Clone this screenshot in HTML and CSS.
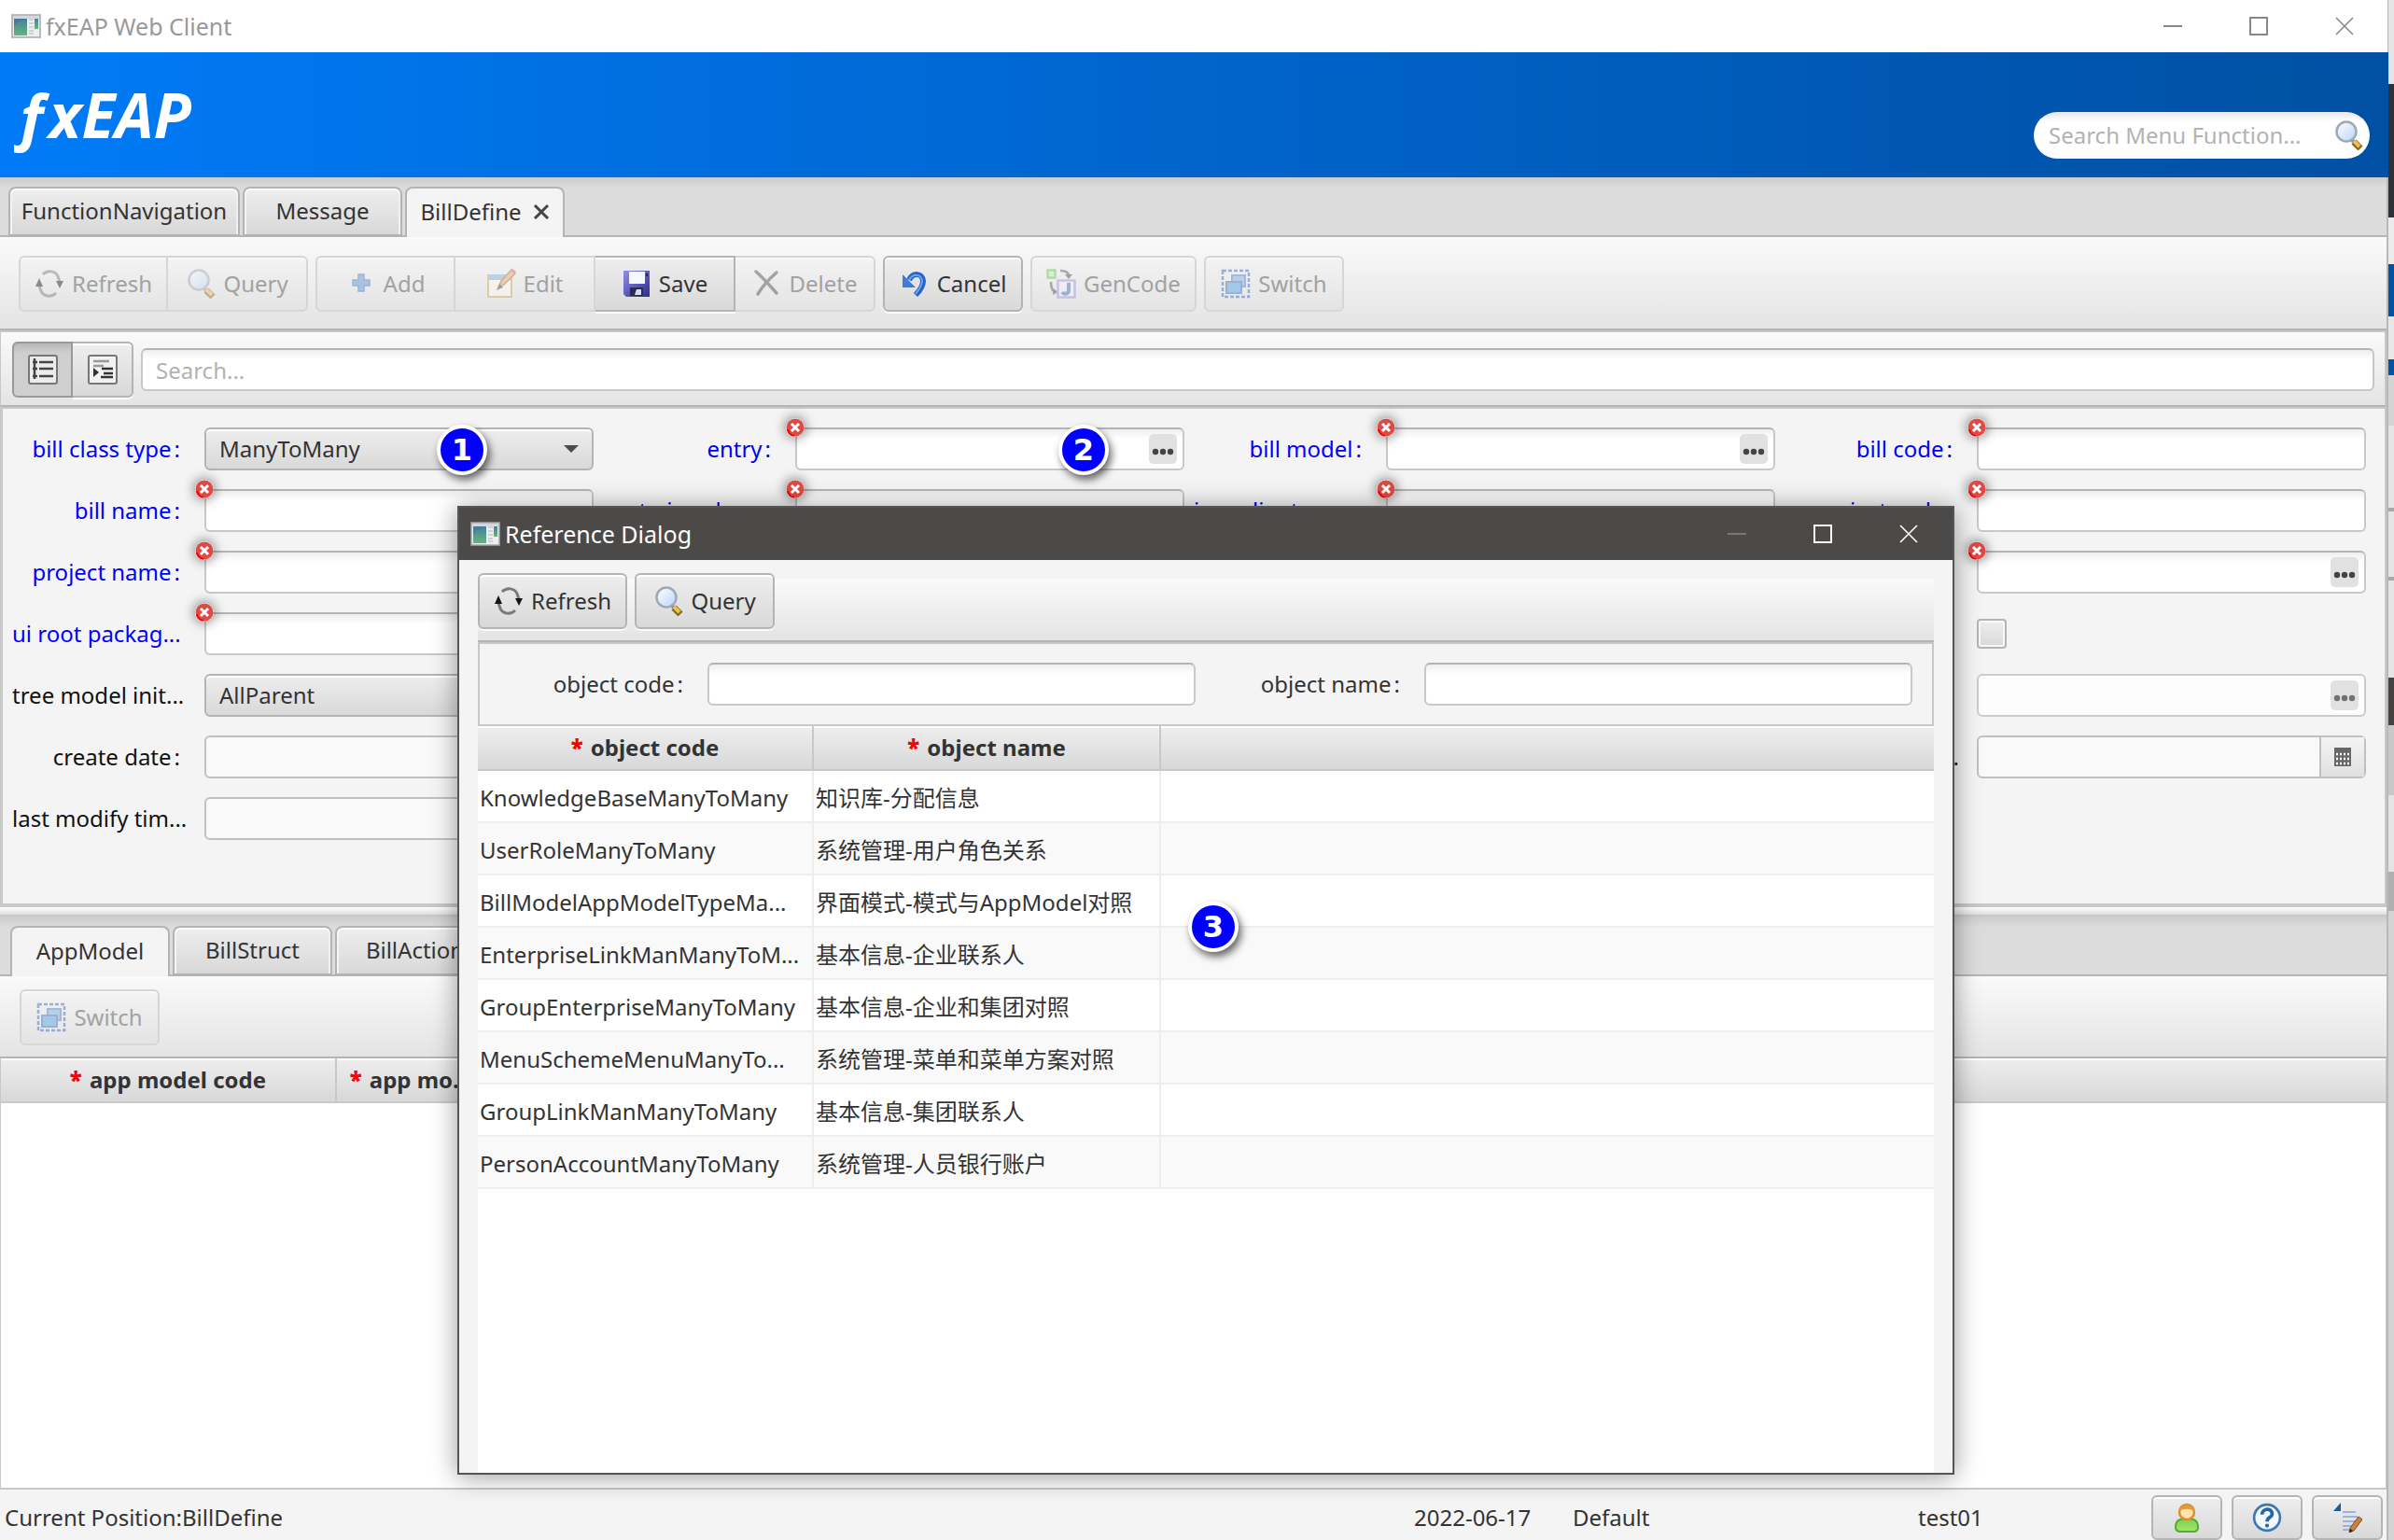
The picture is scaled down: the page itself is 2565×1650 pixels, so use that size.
FILE: index.html
```html
<!DOCTYPE html>
<html lang="en">
<head>
<meta charset="utf-8">
<title>fxEAP Web Client</title>
<link rel="stylesheet" href="styles.css">
</head>
<body>
<svg class="defs" aria-hidden="true">
  <defs>
    <linearGradient id="g-app" x1="0" y1="0" x2="0" y2="1"><stop offset="0" stop-color="#4a7da0"/><stop offset="1" stop-color="#5fb878"/></linearGradient>
    <linearGradient id="g-lens" x1="0" y1="0" x2="1" y2="1"><stop offset="0" stop-color="#ffffff"/><stop offset="1" stop-color="#b9d4fa"/></linearGradient>
    <linearGradient id="g-disk" x1="0" y1="0" x2="1" y2="1"><stop offset="0" stop-color="#8f8ff0"/><stop offset="1" stop-color="#2a2a90"/></linearGradient>
    <linearGradient id="g-green" x1="0" y1="0" x2="0" y2="1"><stop offset="0" stop-color="#7ccf4e"/><stop offset="1" stop-color="#a5e66b"/></linearGradient>
  </defs>
  <symbol id="i-app" viewBox="0 0 32 26">
    <rect x="1" y="1" width="30" height="24" fill="#eceef0" stroke="#a3a8ad" stroke-width="1.5"/>
    <rect x="2" y="2" width="28" height="3" fill="#d2d8dd"/>
    <rect x="3" y="5" width="14" height="18" fill="url(#g-app)"/>
    <path d="M3 14C7 8 12 6 17 6V5H3z" fill="#44799c" opacity=".7"/>
    <path d="M19 6h5M19 10h5M19 14h5M19 18h5M19 21h5" stroke="#c4c8cc" stroke-width="1.5"/>
    <rect x="25" y="5" width="4" height="11" fill="url(#g-app)"/>
  </symbol>
  <symbol id="i-refresh" viewBox="0 0 32 32">
    <path d="M9 6C14 1 22 2 25 8l2 6M23 26C18 31 10 30 7 24l-2-6" fill="none" stroke="#7a7a7a" stroke-width="3"/>
    <path d="M5 10l4 9H1zM27 21l-4-8h8z" fill="#161616"/>
  </symbol>
  <symbol id="i-query" viewBox="0 0 32 32">
    <path d="M20 21l4 4" stroke="#8d8d8d" stroke-width="4"/>
    <path d="M22 23l7 7" stroke="#8a6420" stroke-width="7"/>
    <path d="M22 22l6 6" stroke="#e8c24e" stroke-width="4"/>
    <circle cx="14" cy="12" r="10.500" fill="url(#g-lens)" stroke="#a0a8b2" stroke-width="2.500"/>
  </symbol>
  <symbol id="i-add" viewBox="0 0 32 32">
    <path d="M13 6h6v6h6v6h-6v6h-6v-6H7v-6h6z" fill="#5e8fd8" stroke="#3f6fc0" stroke-width="1.500"/>
  </symbol>
  <symbol id="i-edit" viewBox="0 0 32 32">
    <rect x="2" y="7" width="25" height="23" fill="#fffdf2" stroke="#c4a860" stroke-width="2"/>
    <rect x="2" y="6" width="25" height="6" fill="#7fb0d8"/>
    <path d="M13 20l3-7L27 1l4 4-12 12z" fill="#e8a868" stroke="#a86830" stroke-width="1.500"/>
    <path d="M11 23l3-7 4 4z" fill="#444"/><path d="M26 2l4 4 2-3-4-3z" fill="#e05a50"/>
  </symbol>
  <symbol id="i-save" viewBox="0 0 32 32">
    <path d="M2 2h28v28H5l-3-3z" fill="url(#g-disk)"/>
    <path d="M8 3h17v13H8z" fill="#f6f8ff"/><path d="M26 5h2v3h-2z" fill="#20206a"/>
    <path d="M9 20h14v9H9z" fill="#2b2b52"/><path d="M16 22h5v6h-7z" fill="#d5dcf2"/>
  </symbol>
  <symbol id="i-delete" viewBox="0 0 32 32">
    <path d="M4 3c7 6 13 13 22 23M26 4C19 10 12 17 6 27" fill="none" stroke="#4a4a4a" stroke-width="3.500" stroke-linecap="round"/>
  </symbol>
  <symbol id="i-cancel" viewBox="0 0 32 32">
    <path d="M10 12C14 4 24 4 25 13c0 6-3 10-8 15" fill="none" stroke="#2c62c8" stroke-width="6"/>
    <path d="M10 12C14 5 23 5 24 13c0 5-3 9-7 14" fill="none" stroke="#6aa4f0" stroke-width="2"/>
    <path d="M3 6v14h14z" fill="#3f79da"/>
  </symbol>
  <symbol id="i-gencode" viewBox="0 0 32 32">
    <rect x="1.500" y="1.500" width="8" height="8" fill="#c8f0c0" stroke="#5cc94c" stroke-width="2.500"/>
    <path d="M15 2c6 0 9 2 9 6M5 14c0 6 1 9 4 11" fill="none" stroke="#555" stroke-width="2.500"/>
    <path d="M20 6h8l-4 5zM8 21l4 4-5 3z" fill="#444"/>
    <rect x="12.500" y="12.500" width="18" height="18" fill="#f4f0ff" stroke="#a48ee0" stroke-width="2.500"/>
    <path d="M24 15v8c0 4-5 5-7 2" fill="none" stroke="#3c6eb0" stroke-width="4"/>
  </symbol>
  <symbol id="i-switch" viewBox="0 0 32 32">
    <rect x="2" y="2" width="28" height="28" fill="none" stroke="#3a62b8" stroke-width="2.500" stroke-dasharray="4 2"/>
    <rect x="12" y="7" width="14" height="12" fill="#7aaee0" stroke="#4a7cc4" stroke-width="2"/>
    <rect x="6" y="14" width="16" height="12" fill="#4f9fe6" stroke="#3a6cb8" stroke-width="2"/>
  </symbol>
  <symbol id="i-tree" viewBox="0 0 32 32">
    <rect x="1" y="1" width="30" height="30" rx="2" fill="#ececec" stroke="#777" stroke-width="2"/>
    <path d="M7 4v22M5 8h5M5 15h5M5 23h5M12 8h15M12 15h15M12 23h15" stroke="#444" stroke-width="2.500"/>
  </symbol>
  <symbol id="i-indent" viewBox="0 0 32 32">
    <rect x="1" y="1" width="30" height="30" rx="2" fill="#f2f2f2" stroke="#777" stroke-width="2"/>
    <path d="M6 7h17M6 12h11" stroke="#999" stroke-width="2.500"/>
    <path d="M15 15h12M17 20h10M14 24h13" stroke="#333" stroke-width="2.500"/><path d="M6 14v10l6-5z" fill="#333"/>
  </symbol>
  <symbol id="i-dots" viewBox="0 0 30 32"><circle cx="7" cy="19" r="3.200"/><circle cx="15" cy="19" r="3.200"/><circle cx="23" cy="19" r="3.200"/></symbol>
  <symbol id="i-error" viewBox="0 0 20 20">
    <circle cx="10" cy="10" r="9.500" fill="#de4a45"/><path d="M2 12a8 8 0 0 0 7 7" fill="none" stroke="#e00" stroke-width="2"/>
    <path d="M6 6l8 8M14 6l-8 8" stroke="#fff" stroke-width="3"/>
  </symbol>
  <symbol id="i-min" viewBox="0 0 20 20"><path d="M0 10h20" stroke="currentColor" stroke-width="2"/></symbol>
  <symbol id="i-max" viewBox="0 0 20 20"><path d="M1 1h18v18H1z" fill="none" stroke="currentColor" stroke-width="2"/></symbol>
  <symbol id="i-close" viewBox="0 0 20 20"><path d="M1 1l18 18M19 1L1 19" stroke="currentColor" stroke-width="1.600"/></symbol>
  <symbol id="i-tabclose" viewBox="0 0 18 18"><path d="M2 2l14 14M16 2L2 16" stroke="#444" stroke-width="3"/></symbol>
  <symbol id="i-cal" viewBox="0 0 18 20"><path d="M0 0h18v20H0z" fill="#666"/><path d="M2 7h14M2 12h14M2 17h14" stroke="#fff" stroke-width="2.500" stroke-dasharray="2 2"/></symbol>
  <symbol id="i-user" viewBox="0 0 28 32">
    <path d="M2 26c0-7 4-9 12-9s12 2 12 9c0 4-2 5-5 5H7c-3 0-5-1-5-5z" fill="url(#g-green)" stroke="#4fae2c" stroke-width="2"/>
    <circle cx="14" cy="10" r="8" fill="#ffe2ae" stroke="#dd8f2b" stroke-width="2.500"/><path d="M6 9c1-8 15-9 16 0-5-3-11-3-16 0z" fill="#e49a3a"/>
  </symbol>
  <symbol id="i-help" viewBox="0 0 30 30">
    <circle cx="15" cy="15" r="13" fill="#f2f8ff" stroke="#3f78b0" stroke-width="2.500"/>
    <path d="M10 12c0-7 11-7 10 0-1 3-5 3-5 7" fill="none" stroke="#2c669f" stroke-width="3.500"/><circle cx="15" cy="23" r="2" fill="#2c669f"/>
  </symbol>
  <symbol id="i-note" viewBox="0 0 32 32">
    <path d="M9 0v9H1z" fill="#1c5c94"/>
    <path d="M11 10h14M11 15h16M11 20h14M11 25h10M11 29h7" stroke="#9fb0dc" stroke-width="2"/>
    <path d="M19 27l9-12 4 3-9 12-5 2z" fill="#c98240" stroke="#7a4a1c" stroke-width="1"/><path d="M19 28l-1 4 4-2z" fill="#222"/>
  </symbol>
</svg>

<div class="desktop">
<div class="window">
  <div class="titlebar">
    <svg class="app-icon"><use href="#i-app"/></svg>
    <span class="title">fxEAP Web Client</span>
    <div class="winctl">
      <button aria-label="Minimize"><svg><use href="#i-min"/></svg></button>
      <button aria-label="Maximize"><svg><use href="#i-max"/></svg></button>
      <button aria-label="Close"><svg><use href="#i-close"/></svg></button>
    </div>
  </div>

  <header class="banner">
    <h1 class="logo">ƒxEAP</h1>
    <div class="menu-search">
      <input type="text" placeholder="Search Menu Function..." aria-label="Search Menu Function">
      <svg><use href="#i-query"/></svg>
    </div>
  </header>

  <div class="tabs main-tabs" role="tablist">
    <button class="tab tab-nav" role="tab">FunctionNavigation</button>
    <button class="tab" role="tab">Message</button>
    <button class="tab active" role="tab" aria-selected="true">BillDefine<svg class="tab-close"><use href="#i-tabclose"/></svg></button>
  </div>

  <div class="toolbar main-toolbar">
    <div class="group">
      <button class="btn" disabled><svg><use href="#i-refresh"/></svg>Refresh</button>
      <button class="btn" disabled><svg><use href="#i-query"/></svg>Query</button>
    </div>
    <div class="group">
      <button class="btn" disabled><svg><use href="#i-add"/></svg>Add</button>
      <button class="btn" disabled><svg><use href="#i-edit"/></svg>Edit</button>
      <button class="btn"><svg><use href="#i-save"/></svg>Save</button>
      <button class="btn" disabled><svg><use href="#i-delete"/></svg>Delete</button>
    </div>
    <button class="btn"><svg><use href="#i-cancel"/></svg>Cancel</button>
    <button class="btn" disabled><svg><use href="#i-gencode"/></svg>GenCode</button>
    <button class="btn" disabled><svg><use href="#i-switch"/></svg>Switch</button>
  </div>

  <div class="toolbar search-row">
    <div class="group">
      <button class="btn toggle on" aria-label="List" aria-pressed="true"><svg><use href="#i-tree"/></svg></button>
      <button class="btn toggle" aria-label="Indent"><svg><use href="#i-indent"/></svg></button>
    </div>
    <input class="box" type="text" placeholder="Search..." aria-label="Search">
  </div>

  <form class="form">
    <div class="col">
      <div class="field req"><label for="f-type">bill class type<i>:</i></label><div class="box combo"><select id="f-type"><option>ManyToMany</option></select></div></div>
      <div class="field req"><label for="f-name">bill name<i>:</i></label><div class="box"><input id="f-name" type="text"><svg class="error"><use href="#i-error"/></svg></div></div>
      <div class="field req"><label for="f-proj">project name<i>:</i></label><div class="box"><input id="f-proj" type="text"><svg class="error"><use href="#i-error"/></svg></div></div>
      <div class="field req"><label class="cut" for="f-pack">ui root packag...</label><div class="box"><input id="f-pack" type="text"><svg class="error"><use href="#i-error"/></svg></div></div>
      <div class="field"><label class="cut" for="f-tree">tree model init...</label><div class="box combo"><select id="f-tree"><option>AllParent</option></select></div></div>
      <div class="field"><label for="f-create">create date<i>:</i></label><div class="box dim"><input id="f-create" type="text" readonly></div></div>
      <div class="field"><label class="cut" for="f-mod">last modify tim...</label><div class="box dim"><input id="f-mod" type="text" readonly></div></div>
    </div>
    <div class="col">
      <div class="field req"><label for="f-entry">entry<i>:</i></label><div class="box"><input id="f-entry" type="text"><button type="button" class="pick" aria-label="Pick entry"><svg><use href="#i-dots"/></svg></button><svg class="error"><use href="#i-error"/></svg></div></div>
      <div class="field req"><label for="f-c2">root ui package<i>:</i></label><div class="box"><input id="f-c2" type="text"><svg class="error"><use href="#i-error"/></svg></div></div>
    </div>
    <div class="col">
      <div class="field req"><label for="f-model">bill model<i>:</i></label><div class="box"><input id="f-model" type="text"><button type="button" class="pick" aria-label="Pick bill model"><svg><use href="#i-dots"/></svg></button><svg class="error"><use href="#i-error"/></svg></div></div>
      <div class="field req"><label class="cut" for="f-c3">java client pa...</label><div class="box"><input id="f-c3" type="text"><svg class="error"><use href="#i-error"/></svg></div></div>
    </div>
    <div class="col">
      <div class="field req"><label for="f-code">bill code<i>:</i></label><div class="box"><input id="f-code" type="text"><svg class="error"><use href="#i-error"/></svg></div></div>
      <div class="field req"><label for="f-pcode">project code<i>:</i></label><div class="box"><input id="f-pcode" type="text"><svg class="error"><use href="#i-error"/></svg></div></div>
      <div class="field req"><label></label><div class="box"><input type="text" aria-label="Reference"><button type="button" class="pick" aria-label="Pick"><svg><use href="#i-dots"/></svg></button><svg class="error"><use href="#i-error"/></svg></div></div>
      <div class="field"><label></label><input class="check" type="checkbox" aria-label="Option"></div>
      <div class="field"><label></label><div class="box faint"><input type="text" aria-label="Reference" disabled><button type="button" class="pick" aria-label="Pick" disabled><svg><use href="#i-dots"/></svg></button></div></div>
      <div class="field"><label class="cut" for="f-date">last modify dat...</label><div class="box dim"><input id="f-date" type="text" readonly><button type="button" class="cal" aria-label="Calendar"><svg><use href="#i-cal"/></svg></button></div></div>
    </div>
    <span class="callout one">1</span>
    <span class="callout two">2</span>
  </form>
  <div class="splitter"></div>

  <div class="tabs sub-tabs" role="tablist">
    <button class="tab active" role="tab" aria-selected="true">AppModel</button>
    <button class="tab" role="tab">BillStruct</button>
    <button class="tab" role="tab">BillAction</button>
  </div>
  <div class="toolbar sub-toolbar">
    <button class="btn" disabled><svg><use href="#i-switch"/></svg>Switch</button>
  </div>
  <div class="sub-grid">
    <table class="grid">
      <colgroup><col class="w-a"><col class="w-b"><col></colgroup>
      <thead><tr><th><b>*</b> app model code</th><th><b>*</b> app mo...</th><th></th></tr></thead>
    </table>
  </div>

  <footer class="status">
    <span class="pos">Current Position:BillDefine</span>
    <span class="date">2022-06-17</span>
    <span class="unit">Default</span>
    <span class="who">test01</span>
    <div class="status-btns">
      <button class="btn" aria-label="User"><svg><use href="#i-user"/></svg></button>
      <button class="btn" aria-label="Help"><svg><use href="#i-help"/></svg></button>
      <button class="btn" aria-label="Notes"><svg><use href="#i-note"/></svg></button>
    </div>
  </footer>
</div>
<div class="behind"></div>

<section class="dialog" role="dialog" aria-label="Reference Dialog">
  <div class="titlebar dark">
    <svg class="app-icon"><use href="#i-app"/></svg>
    <span class="title">Reference Dialog</span>
    <div class="winctl">
      <button class="off" aria-label="Minimize"><svg><use href="#i-min"/></svg></button>
      <button aria-label="Maximize"><svg><use href="#i-max"/></svg></button>
      <button aria-label="Close"><svg><use href="#i-close"/></svg></button>
    </div>
  </div>
  <div class="dialog-body">
    <div class="toolbar dialog-toolbar">
      <button class="btn"><svg><use href="#i-refresh"/></svg>Refresh</button>
      <button class="btn"><svg><use href="#i-query"/></svg>Query</button>
    </div>
    <div class="filter">
      <div class="field"><label for="q-code">object code<i>:</i></label><input class="box" id="q-code" type="text"></div>
      <div class="field"><label for="q-name">object name<i>:</i></label><input class="box" id="q-name" type="text"></div>
    </div>
    <div class="result">
      <table class="grid rows">
        <colgroup><col class="w-c"><col class="w-d"><col></colgroup>
        <thead><tr><th><b>*</b> object code</th><th><b>*</b> object name</th><th></th></tr></thead>
        <tbody>
          <tr><td>KnowledgeBaseManyToMany</td><td>知识库-分配信息</td><td></td></tr>
          <tr><td>UserRoleManyToMany</td><td>系统管理-用户角色关系</td><td></td></tr>
          <tr><td>BillModelAppModelTypeMa...</td><td>界面模式-模式与AppModel对照</td><td></td></tr>
          <tr><td>EnterpriseLinkManManyToM...</td><td>基本信息-企业联系人</td><td></td></tr>
          <tr><td>GroupEnterpriseManyToMany</td><td>基本信息-企业和集团对照</td><td></td></tr>
          <tr><td>MenuSchemeMenuManyTo...</td><td>系统管理-菜单和菜单方案对照</td><td></td></tr>
          <tr><td>GroupLinkManManyToMany</td><td>基本信息-集团联系人</td><td></td></tr>
          <tr><td>PersonAccountManyToMany</td><td>系统管理-人员银行账户</td><td></td></tr>
        </tbody>
      </table>
    </div>
  </div>
  <span class="callout three">3</span>
</section>
</div>
</body>
</html>
```
FILE: styles.css
```css
* { box-sizing: border-box; }

body {
  margin: 0;
  font: 24px/32px "Noto Sans", "Noto Sans CJK SC", sans-serif;
  color: #333;
  background: #f4f4f4;
}

button, input, select { font: inherit; color: inherit; margin: 0; }
.defs { position: absolute; width: 0; height: 0; }

.desktop { position: relative; display: flex; min-height: 100vh; overflow: hidden; }
.window { flex: 1; min-width: 0; display: flex; flex-direction: column; border-right: 2px solid #b8b8b8; }
.behind {
  width: 6px;
  background: linear-gradient(#e4e4e4 90px, #2d3137 90px 233px, #ececec 233px 283px, #0052a5 283px 339px, #e8e8e8 339px 385px, #0052a5 385px 402px, #d4d4d4 402px 456px, #e4e4e4 456px 544px, #a8a8a8 544px 548px, #e4e4e4 548px 618px, #a8a8a8 618px 622px, #e4e4e4 622px 726px, #454341 726px 777px, #c8c8c8 777px 852px, #e4e4e4 852px 934px, #b0b0b0 934px 976px, #d4d4d4 976px);
}

/* title bars */
.titlebar { display: flex; align-items: center; height: 56px; padding-left: 12px; background: #fff; color: #999; }
.app-icon { width: 32px; height: 26px; }
.title { flex: 1; padding-left: 5px; font-size: 25px; }
.winctl { display: flex; }
.winctl button { width: 92px; height: 54px; padding: 0; border: 0; background: none; color: #888; }
.winctl svg { width: 20px; height: 20px; display: block; margin: 0 auto; }
.window > .titlebar { margin-right: -1px; }
.dark { padding-right: 1px; background: #4c4a48; color: #fff; }
.dark .winctl button { color: #fff; }
.dark .winctl .off { color: #777; }

/* banner */
.banner { display: flex; align-items: flex-start; justify-content: space-between; height: 134px; padding: 0 20px 0 16px; background: linear-gradient(90deg, #007bf7, #0056b0 83%, #0051a3); margin-right: -2px; }
.logo { margin: 21px 0 0; font: italic 700 66px/90px "Open Sans", sans-serif; color: #fff; }
.menu-search { display: flex; align-items: center; width: 360px; height: 50px; margin-top: 64px; padding: 0 7px 0 16px; border-radius: 25px; background: linear-gradient(#e6e6e6, #fff 10px); }
.menu-search input { flex: 1; min-width: 0; padding: 0; border: 0; background: none; outline: 0; }
.menu-search svg { width: 32px; height: 32px; }
::placeholder { color: #b2b2b2; opacity: 1; }

/* tabs */
.tabs { display: flex; gap: 3px; height: 64px; padding: 10px 9px 0; border-bottom: 2px solid #b4b4b4; background: linear-gradient(#cdcdcd, #dcdcdc 12px); }
.tab { display: flex; align-items: center; justify-content: center; gap: 12px; width: 171px; height: 54px; margin-bottom: -2px; padding: 0 0 2px; border: 2px solid #b4b4b4; border-radius: 8px 8px 0 0; background: linear-gradient(#eee, #d8d8d8); box-shadow: inset 0 2px #fff, inset 2px 0 #f4f4f4, inset -2px 0 #f0f0f0; white-space: nowrap; }
.tab-nav { width: 248px; }
.tab.active { border-bottom: 0; background: #f4f4f4; box-shadow: none; }
.tab:not(.active) { height: 53px; }
.tab-close { width: 18px; height: 18px; }
.sub-tabs { padding-left: 11px; }

/* toolbars and buttons */
.toolbar { display: flex; gap: 8px; background: linear-gradient(#fafafa, #e4e4e4); border-bottom: 2px solid #b4b4b4; }
.main-toolbar { padding: 20px 20px 18px; }
.main-toolbar, .search-row, .dialog-toolbar { box-shadow: 0 2px #c8c8c8; margin-bottom: 2px; }
.group { display: flex; }
.btn { display: flex; align-items: center; justify-content: center; gap: 8px; min-width: 150px; height: 60px; padding: 0 15px; border: 2px solid #b4b4b4; border-radius: 6px; background: linear-gradient(#eee, #d9d9d9); box-shadow: inset 0 2px #fff, 0 2px #fafafa; white-space: nowrap; }
.btn svg { width: 32px; height: 32px; flex: none; }
.btn:disabled { color: #a2a2a2; border-color: #d6d6d6; background: linear-gradient(#f3f3f3, #e4e4e4); box-shadow: inset 0 2px #f8f8f8; }
.btn:disabled svg { opacity: .45; }
.group .btn:not(:first-child) { border-left-width: 0; border-top-left-radius: 0; border-bottom-left-radius: 0; }
.group .btn:not(:last-child) { border-top-right-radius: 0; border-bottom-right-radius: 0; }
.search-row { align-items: center; padding: 10px 11px 8px 12px; border-left: 1px solid #c8c8c8; border-right: 2px solid #c8c8c8; }
.toggle { min-width: 65px; padding: 0; }
.toggle.on { background: linear-gradient(#b8b8b8, #cfcfcf 10px); border-color: #999; box-shadow: none; }
.sub-toolbar { padding: 14px 21px 12px; }

/* form */
.form { position: relative; display: grid; grid-template-columns: repeat(4, minmax(0, 1fr)); gap: 10px; padding: 20px 20px 68px 10px; border: solid #c8c8c8; border-width: 0 2px 4px 3px; background: #f4f4f4; }
.col { display: flex; flex-direction: column; gap: 20px; }
.field { display: flex; align-items: center; height: 46px; }
.field label { flex: none; width: 206px; padding-right: 26px; text-align: right; color: #111; white-space: nowrap; }
.field label i { font-style: normal; padding-left: 3px; }
.field.req label { color: #00f; }
.field label.cut { padding-right: 0; text-align: left; }
.box { position: relative; flex: 1; min-width: 0; display: flex; align-items: center; height: 46px; border: 2px solid #c8c8c8; border-top-color: #b4b4b4; border-radius: 6px; background: linear-gradient(#eee, #fff 10px); }
input.box { padding: 0 14px; outline: 0; }
.box input, .box select { flex: 1; min-width: 0; height: 100%; padding: 0 14px; border: 0; background: none; outline: 0; }
.dim { background: #f9f9f9; border-color: #c0c0c0; }
.faint { background: #fdfdfd; border-color: #ccc; }
.combo { border-color: #b4b4b4; background: linear-gradient(#eee, #d9d9d9); box-shadow: inset 0 2px #fff; }
.combo select { appearance: none; opacity: 1; }
.combo::after { content: ""; position: absolute; right: 14px; top: 17px; border: solid transparent; border-width: 8px 8px 0; border-top-color: #4c4c4c; pointer-events: none; }
.error { position: absolute; left: -12px; top: -12px; width: 20px; height: 20px; border-radius: 50%; box-shadow: 0 0 12px 2px rgba(0, 0, 0, .4); }
.pick { width: 30px; height: 32px; margin-right: 6px; padding: 0; border: 0; border-radius: 5px; background: #e1e1e1; }
.pick svg { display: block; width: 30px; height: 32px; fill: #444; }
.pick:disabled svg { opacity: .7; }
.cal { display: flex; align-items: center; justify-content: center; width: 48px; height: 42px; padding: 0; border: 0; border-left: 2px solid #c0c0c0; background: linear-gradient(#f4f4f4, #e0e0e0); }
.cal svg { width: 18px; height: 20px; }
.check { appearance: none; width: 32px; height: 32px; border: 2px solid #b4b4b4; border-radius: 4px; background: linear-gradient(#eee, #d9d9d9); box-shadow: inset 0 0 0 2px #f8f8f8; }

.splitter { height: 10px; border-bottom: 2px solid #c8c8c8; background: linear-gradient(#fff, #dedede); }

/* numbered callouts */
.callout { position: absolute; display: flex; align-items: center; justify-content: center; width: 54px; height: 54px; border: 4px solid #fff; border-radius: 50%; background: #00f; color: #fff; font: 700 32px/44px "DejaVu Sans", sans-serif; box-shadow: 3px 5px 8px rgba(0, 0, 0, .6); }
.one { left: 465px; top: 17px; }
.two { left: 1131px; top: 17px; }
.three { left: 781px; top: 422px; }

/* data tables */
.grid { width: 100%; border-collapse: separate; border-spacing: 0; table-layout: fixed; }
.grid th { height: 48px; padding: 0; border: solid #c8c8c8; border-width: 0 2px 2px 0; background: linear-gradient(#eee, #d8d8d8); box-shadow: inset 0 2px #fff; font-weight: 700; white-space: nowrap; }
.grid th:last-child { border-right: 0; }
.grid th b { color: #f00; padding-right: 2px; }
.w-a { width: 360px; }
.w-b { width: 160px; }
.w-c { width: 360px; }
.w-d { width: 372px; }
.rows td { height: 56px; padding: 4px 2px 0; border: solid #ededed; border-width: 0 2px 2px 0; white-space: nowrap; }
.rows td:last-child { border-right: 0; }
.rows tr:nth-child(even) td { background: #f9f9f9; }
.sub-grid { flex: 1; border: solid #c8c8c8; border-width: 0 1px 2px; background: #fff; }

/* status bar */
.status { display: flex; align-items: center; height: 54px; padding: 6px 4px 0 5px; background: #f4f4f4; }
.pos { flex: 1; }
.date { width: 170px; }
.unit { width: 370px; }
.who { width: 250px; }
.status-btns { display: flex; gap: 10px; }
.status-btns .btn { min-width: 76px; height: 48px; padding: 0; }

/* reference dialog */
.dialog { position: absolute; left: 490px; top: 542px; width: 1604px; height: 1038px; display: flex; flex-direction: column; border: 2px solid #555; background: #f4f4f4; box-shadow: 0 2px 26px rgba(0, 0, 0, .4); }
.dialog-body { flex: 1; min-height: 0; display: flex; flex-direction: column; margin: 14px 20px 0; }
.dialog-toolbar { align-items: flex-start; padding-bottom: 12px; background: linear-gradient(transparent 6px, #fafafa 6px, #e4e4e4); }
.filter { display: grid; grid-template-columns: 1fr 1fr; padding: 20px 21px 20px 36px; border: 2px solid #c8c8c8; border-top: 0; column-gap: 37px; }
.filter .field label { width: 208px; color: #333; }
.result { flex: 1; background: #fff; }
```
